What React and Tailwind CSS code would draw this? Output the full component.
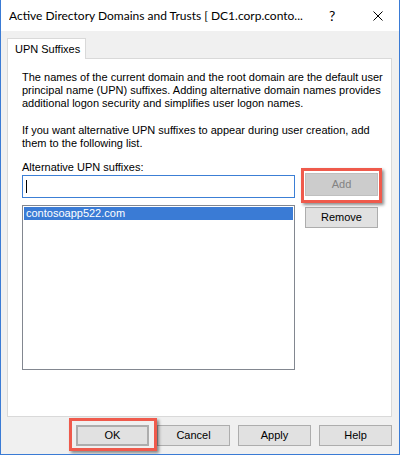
import React from "react";

const sans = { fontFamily: '"Liberation Sans", Arial, sans-serif' };

function Btn({ children, className = "", disabled = false }) {
  return (
    <div
      className={
        "flex items-center justify-center w-[73px] border text-[11px] leading-none " +
        (disabled
          ? "bg-[#cccccc] border-[#bfbfbf] text-[#838383] "
          : "bg-[#e1e1e1] border-[#adadad] text-black ") +
        className
      }
    >
      {children}
    </div>
  );
}

export default function App() {
  return (
    <div
      className="w-[400px] h-[455px] bg-[#f0f0f0] border-l border-r border-b border-[#3a7bd5] flex flex-col overflow-hidden"
      style={sans}
    >
      {/* Title bar */}
      <div className="h-[31px] bg-white flex items-center pl-[8px] shrink-0">
        <div
          className="w-[320px] text-[12px] text-black whitespace-nowrap overflow-hidden"
          style={{ fontFamily: 'Lato, "Noto Sans", sans-serif' }}
        >
          Active Directory Domains and Trusts [ DC1.corp.conto...
        </div>
        <div
          className="w-[10px] text-[14px] text-black"
          style={{ fontFamily: 'Lato, sans-serif' }}
        >
          ?
        </div>
        <svg className="ml-[34px]" width="10" height="10" viewBox="0 0 10 10">
          <path d="M0.5 0.5 L9.5 9.5 M9.5 0.5 L0.5 9.5" stroke="#000" strokeWidth="1" />
        </svg>
      </div>

      {/* Body */}
      <div className="flex flex-col pt-[7px] pl-[6px] pr-[7px] flex-1">
        {/* Tab */}
        <div className="relative z-10 -mb-px w-[79px] h-[21px] bg-white border-t border-l border-r border-[#d9d9d9] flex items-center pl-[7px] text-[11px] text-black whitespace-nowrap">
          UPN Suffixes
        </div>

        {/* Panel */}
        <div className="h-[359px] bg-white border border-[#d9d9d9] pt-[12px] pl-[14px] pr-[12px] flex flex-col text-[11px] leading-[13px] text-black whitespace-nowrap">
          <p>
            The names of the current domain and the root domain are the default user
            <br />
            principal name (UPN) suffixes. Adding alternative domain names provides
            <br />
            additional logon security and simplifies user logon names.
          </p>
          <p className="mt-[14px]">
            If you want alternative UPN suffixes to appear during user creation, add
            <br />
            them to the following list.
          </p>
          <div className="mt-[11px] flex gap-[10px]">
            <div className="w-[273px] flex flex-col">
              <div>Alternative UPN suffixes:</div>
              <div className="mt-[1px] h-[23px] border border-[#3c7fd5] bg-white flex items-center pl-[3px]">
                <div className="w-px h-[13px] bg-black" />
              </div>
              <div className="mt-[7px] h-[165px] border border-[#828790] bg-white p-px">
                <div className="h-[13px] bg-[#3a7bd5] text-white pl-[2px] leading-[13px]">
                  contosoapp522.com
                </div>
              </div>
            </div>
            <div className="flex flex-col pt-[12px]">
              <div className="relative">
                <Btn disabled className="h-[23px]">Add</Btn>
                <div className="absolute -left-[4px] -right-[4px] -top-[5px] -bottom-[7px] border-[3px] border-[#ef5a4c] shadow-[2px_2px_3px_rgba(0,0,0,0.45)] pointer-events-none" />
              </div>
              <Btn className="mt-[11px] h-[21px]">Remove</Btn>
            </div>
          </div>
        </div>

        {/* Bottom buttons */}
        <div className="mt-[8px] flex justify-end gap-[8px]">
          <div className="relative">
            <Btn className="h-[21px] border-[2px] border-[#3a7bd5]">OK</Btn>
            <div className="absolute -left-[7px] -right-[8px] -top-[7px] -bottom-[5px] border-[3px] border-[#ef5a4c] shadow-[2px_2px_3px_rgba(0,0,0,0.45)] pointer-events-none" />
          </div>
          <Btn className="h-[21px]">Cancel</Btn>
          <Btn className="h-[21px]">Apply</Btn>
          <Btn className="h-[21px]">Help</Btn>
        </div>
      </div>
    </div>
  );
}
